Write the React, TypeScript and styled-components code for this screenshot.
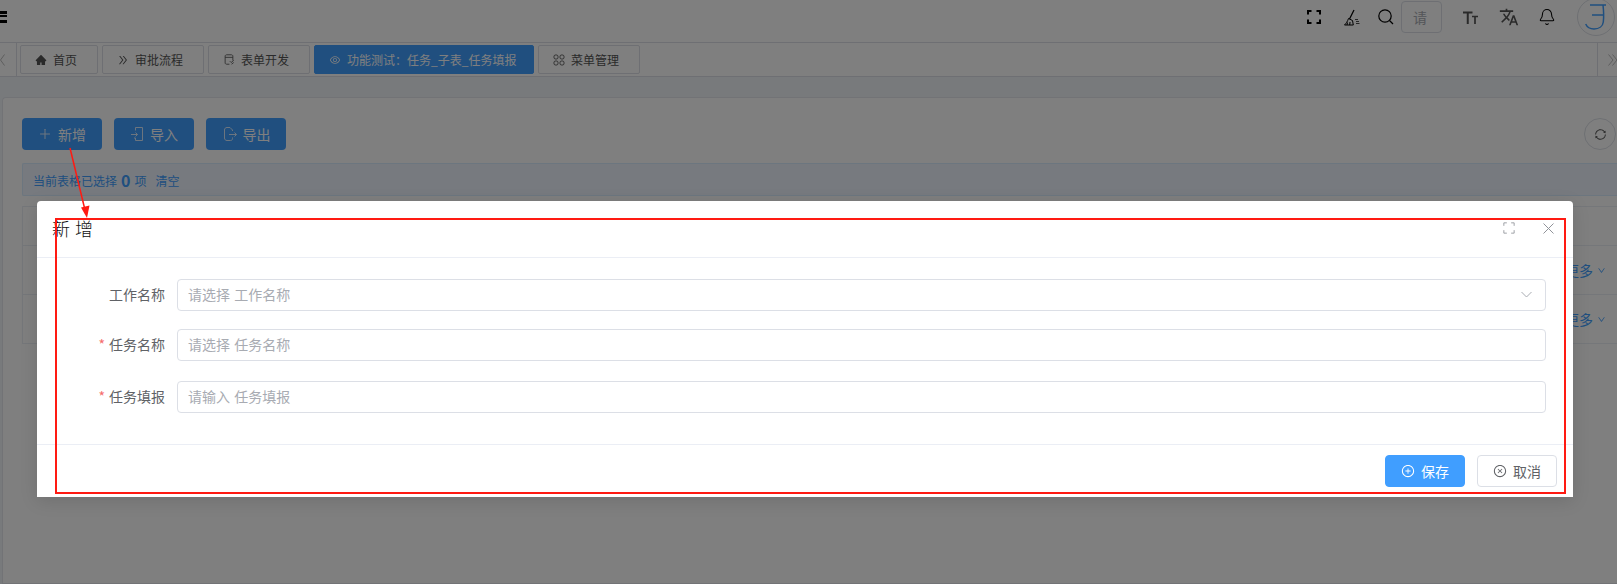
import * as React from 'react';
import styled, { createGlobalStyle } from 'styled-components';
import {
  AiOutlineCloseCircle,
  AiOutlineDoubleRight,
  AiOutlineDown,
  AiOutlineEye,
  AiOutlinePlus,
  AiOutlinePlusCircle,
  AiOutlineSync,
  AiFillHome,
} from 'react-icons/ai';
import { MdTranslate } from 'react-icons/md';
import { Bell } from 'lucide-react';

const GlobalStyle = createGlobalStyle`
  html, body {
    margin: 0;
    padding: 0;
    background: #fff;
    font-family: "Noto Sans CJK SC", "Liberation Sans", sans-serif;
    font-size: 14px;
  }
  * { box-sizing: border-box; }
`;

const Page = styled.div`
  position: relative;
  width: 1617px;
  height: 584px;
  overflow: hidden;
  background: #fff;
`;

const Header = styled.header`
  display: flex;
  align-items: flex-start;
  height: 43px;
  border-bottom: 1px solid #dcdfe6;
`;

const Burger = styled.div`
  width: 7px;
  height: 12px;
  margin-top: 11px;
  border-top: 3px solid #000;
  border-bottom: 3px solid #000;
  &::after {
    content: '';
    display: block;
    height: 2px;
    margin-top: 1px;
    background: #000;
  }
`;

const HeaderTools = styled.div`
  margin-left: auto;
  display: flex;
  align-items: flex-start;
`;

const ToolIcon = styled.span<{ $w: number; $dark?: boolean }>`
  width: ${(p) => p.$w}px;
  height: 34px;
  display: flex;
  align-items: center;
  justify-content: center;
  color: ${(p) => (p.$dark ? '#000' : '#555')};
  font-size: 20px;
`;

const SearchBox = styled.div`
  width: 41px;
  height: 32px;
  margin-top: 1px;
  margin-right: 9px;
  border: 1px solid #dcdfe6;
  border-radius: 4px;
  padding-left: 11px;
  line-height: 30px;
  font-size: 14px;
  color: #a8abb2;
`;

const Avatar = styled.div`
  width: 38px;
  height: 38px;
  margin-left: 11px;
  margin-right: 2px;
  margin-top: -2px;
  border: 1px solid #dcdfe6;
  border-radius: 50%;
  display: flex;
  align-items: center;
  justify-content: center;
`;

const TabBar = styled.nav`
  display: flex;
  height: 34px;
  border-bottom: 1px solid #dcdfe6;
`;

const TabArrow = styled.div<{ $right?: boolean }>`
  width: ${(p) => (p.$right ? '20px' : '17px')};
  flex: none;
  display: flex;
  align-items: center;
  justify-content: flex-start;
  padding-left: ${(p) => (p.$right ? '10px' : '0')};
  margin-left: ${(p) => (p.$right ? 'auto' : '0')};
  color: #bbb;
  border-left: ${(p) => (p.$right ? '1px solid #dcdfe6' : 'none')};
  border-right: ${(p) => (p.$right ? 'none' : '1px solid #dcdfe6')};
`;

const Tabs = styled.div`
  display: flex;
  gap: 4px;
  padding: 2px 0 0 3px;
`;

const Tab = styled.div<{ $w: number; $active?: boolean }>`
  flex: none;
  width: ${(p) => p.$w}px;
  height: 29px;
  display: flex;
  align-items: center;
  gap: 6px;
  padding-left: 14px;
  font-size: 12px;
  white-space: nowrap;
  border: 1px solid ${(p) => (p.$active ? '#409eff' : '#dcdfe6')};
  border-radius: 2px;
  background: ${(p) => (p.$active ? '#409eff' : '#fff')};
  color: ${(p) => (p.$active ? '#fff' : '#555')};
  svg { font-size: 12px; flex: none; }
`;

const Main = styled.main`
  height: 507px;
  padding: 20px 0 0 2px;
  background: #f0f4f9;
`;

const Card = styled.section`
  height: 100%;
  background: #fff;
  border: 1px solid #e4e7ed;
  border-right: none;
  border-radius: 4px 0 0 0;
  padding: 20px 0 0 19px;
`;

const Toolbar = styled.div`
  display: flex;
  align-items: center;
  gap: 12px;
`;

const PrimaryButton = styled.button`
  flex: none;
  width: 80px;
  height: 32px;
  display: flex;
  align-items: center;
  justify-content: center;
  gap: 6px;
  padding: 0 0 1px;
  border: none;
  border-radius: 4px;
  background: #409eff;
  color: #fff;
  font: inherit;
  svg { font-size: 14px; opacity: 0.8; }
`;

const RefreshButton = styled.button`
  margin-left: auto;
  margin-right: 1px;
  width: 32px;
  height: 32px;
  padding: 0;
  display: flex;
  align-items: center;
  justify-content: center;
  background: #fff;
  border: 1px solid #dcdfe6;
  border-radius: 50%;
  color: #555;
  font-size: 13px;
`;

const SelectionBar = styled.div`
  display: flex;
  align-items: center;
  height: 33px;
  margin-top: 13px;
  padding: 1px 0 0 10px;
  background: #eef5fe;
  border: 1px solid #d9ecff;
  border-right: none;
  border-radius: 2px 0 0 2px;
  color: #409eff;
  font-size: 12px;
  strong { font-size: 16px; margin: 0 4px; }
  a { margin-left: 9px; font-size: 12px; }
`;

const TableBox = styled.div`
  margin-top: 10px;
  border-top: 1px solid #ebeef5;
  border-left: 1px solid #ebeef5;
`;

const TableRow = styled.div<{ $h: number }>`
  height: ${(p) => p.$h}px;
  display: flex;
  align-items: center;
  justify-content: flex-end;
  padding-right: 11px;
  gap: 4px;
  border-bottom: 1px solid #ebeef5;
  color: #409eff;
  font-size: 14px;
  svg { font-size: 9px; }
`;

const Mask = styled.div`
  position: absolute;
  inset: 0;
  background: rgba(0, 0, 0, 0.5);
  padding: 201px 0 0 37px;
`;

const Dialog = styled.div`
  position: relative;
  width: 1536px;
  height: 296px;
  background: #fff;
  border-radius: 4px 4px 0 0;
  box-shadow: 0 4px 18px rgba(0, 0, 0, 0.12);
`;

const DialogHeader = styled.div`
  height: 57px;
  display: flex;
  align-items: flex-start;
  padding: 14px 19px 0 15px;
  border-bottom: 1px solid #ebeef5;
`;

const DialogTitle = styled.h2`
  margin: 0;
  font-size: 18px;
  font-weight: 300;
  line-height: 26px;
  word-spacing: 1px;
  color: #111;
`;

const HeaderActions = styled.div`
  margin-left: auto;
  display: flex;
  align-items: center;
  gap: 28px;
  color: #909399;
  padding-top: 7px;
`;

const Form = styled.div`
  height: 187px;
  padding-top: 21px;
  display: flex;
  flex-direction: column;
  border-bottom: 1px solid #ebeef5;
`;

const FormRow = styled.div<{ $gap?: number }>`
  display: flex;
  align-items: center;
  margin-top: ${(p) => p.$gap ?? 0}px;
  padding-right: 27px;
`;

const Label = styled.label`
  width: 128px;
  margin-right: 12px;
  text-align: right;
  color: #606266;
  font-size: 14px;
  line-height: 28px;
  padding-bottom: 3px;
`;

const Required = styled.span`
  color: #f56c6c;
  margin-right: 4px;
`;

const Field = styled.div`
  flex: 1;
  height: 32px;
  display: flex;
  align-items: center;
  justify-content: space-between;
  padding: 0 13px 2px 10px;
  border: 1px solid #dcdfe6;
  border-radius: 4px;
  color: #a8abb2;
  font-size: 14px;
  word-spacing: 1px;
`;

const Footer = styled.div`
  display: flex;
  justify-content: flex-end;
  gap: 12px;
  padding: 10px 16px 0 0;
`;

const FooterButton = styled.button<{ $primary?: boolean }>`
  width: 80px;
  height: 32px;
  display: flex;
  align-items: center;
  justify-content: center;
  gap: 6px;
  padding: 0;
  border: 1px solid ${(p) => (p.$primary ? '#409eff' : '#dcdfe6')};
  border-radius: 4px;
  background: ${(p) => (p.$primary ? '#409eff' : '#fff')};
  color: ${(p) => (p.$primary ? '#fff' : '#606266')};
  font: inherit;
  svg { font-size: 14px; }
`;

const RedFrame = styled.div`
  position: absolute;
  left: 18px;
  top: 17px;
  width: 1511px;
  height: 276px;
  border: 2px solid #ff1a12;
  pointer-events: none;
`;

const ArrowLayer = styled.svg`
  position: absolute;
  left: 0;
  top: 0;
  pointer-events: none;
`;

// corner brackets, the ant icon has different proportions
const Corners: React.FC<{ size: number; width?: number }> = ({ size, width = 2 }) => (
  <svg width={size} height={size} viewBox="0 0 14 14" fill="none" stroke="currentColor" strokeWidth={width}>
    <path d="M1 4.500V1h3.500M9.500 1H13v3.500M13 9.500V13H9.500M4.500 13H1V9.500" />
  </svg>
);

const CloseIcon = () => (
  <svg width="11" height="11" viewBox="0 0 11 11" fill="none" stroke="currentColor" strokeWidth="1">
    <path d="M.5.5l10 10M10.500.5l-10 10" />
  </svg>
);

const Chevron = () => (
  <svg width="11" height="7" viewBox="0 0 11 7" fill="none" stroke="#a8abb2" strokeWidth="1">
    <path d="M.5 1l5 5 5-5" />
  </svg>
);

const LeftArrow = () => (
  <svg width="5" height="12" viewBox="0 0 5 12" fill="none" stroke="currentColor" strokeWidth="1">
    <path d="M4.500.5L.5 6l4 5.500" />
  </svg>
);

const DoubleArrow = () => (
  <svg width="10" height="12" viewBox="0 0 10 12" fill="none" stroke="currentColor" strokeWidth="1" style={{ flex: 'none' }}>
    <path d="M.5.5L5 6l-4.500 5.500M4.500.5L9 6l-4.500 5.500" />
  </svg>
);

const BroomIcon = () => (
  <svg width="16" height="17" viewBox="0 0 16 17" fill="none" stroke="currentColor">
    <path d="M10 1L5.500 10" strokeWidth="1.300" />
    <path d="M4.500 9.500l4 2 .8 4.500H.5c1.500-1.500 3-3.500 4-6.500z" strokeWidth="1" />
    <path d="M3.500 13.500L3 16M6 13l-.3 3" strokeWidth="1" />
    <path d="M11 10.500h3M12 12.500h3M12 14.500h3.500" strokeWidth="1" opacity="0.7" />
  </svg>
);

const SearchIcon = () => (
  <svg width="16" height="16" viewBox="0 0 16 16" fill="none" stroke="currentColor" strokeWidth="1.200">
    <circle cx="7" cy="7" r="6.200" />
    <path d="M11.500 11.500L15 15" />
  </svg>
);

const FontSizeIcon = () => (
  <svg width="15" height="13" viewBox="0 0 15 13" fill="none" stroke="currentColor" strokeWidth="2">
    <path d="M0 1.500h9.500M4.750 1.500V13" />
    <path d="M9 5.500h6M12 5.500V13" strokeWidth="1.700" />
  </svg>
);

const ImportIcon = () => (
  <svg width="14" height="16" viewBox="0 0 14 16" fill="none" stroke="currentColor" strokeWidth="1">
    <path d="M5.500 4.500V1.500h7v13h-7V12l-1.500 0M1 8.500h6.500M5.500 6.500l2 2-2 2" />
  </svg>
);

const ExportIcon = () => (
  <svg width="15" height="16" viewBox="0 0 15 16" fill="none" stroke="currentColor" strokeWidth="1">
    <path d="M10.500 5V4L8 1.500H5C3.500 1.500 2.500 2.500 2.500 4v8c0 1.500 1 2.500 2.500 2.500h3.500c1.500 0 2-1 2-2V11.500M7 8.500h7.500M12.500 6.500l2 2-2 2" />
  </svg>
);

const FormIcon = () => (
  <svg width="12" height="13" viewBox="0 0 14 14" fill="none" stroke="currentColor" strokeWidth="1">
    <path d="M7.500 12.500h-3c-1 0-2-.5-2-1.500V3c0-1 1-1.500 2-1.500h5c1 0 2 .5 2 1.500v5M2.500 4.500h9M8 9l1.500 1.500L12.500 8M10 12.500l2.500-2" />
  </svg>
);

const GridIcon = () => (
  <svg width="12" height="12" viewBox="0 0 13 13" fill="none" stroke="currentColor" strokeWidth="1">
    <rect x="1" y="1" width="4.500" height="4.500" rx="2" />
    <rect x="7.500" y="1" width="4.500" height="4.500" rx="2" />
    <rect x="1" y="7.500" width="4.500" height="4.500" rx="2" />
    <rect x="7.500" y="7.500" width="4.500" height="4.500" rx="2" />
  </svg>
);

const AvatarLogo = () => (
  <svg width="24" height="28" viewBox="0 0 24 28" fill="none" stroke="#409eff" strokeWidth="1.500">
    <path d="M6 2h16M8 12h11M19 2c.8 7 .8 13 .3 17-.5 4-4 7-9.300 7-4 0-7-2-8.300-5" />
  </svg>
);

const tabs = [
  { w: 78, icon: <AiFillHome />, label: '首页' },
  { w: 102, icon: <AiOutlineDoubleRight />, label: '审批流程' },
  { w: 102, icon: <FormIcon />, label: '表单开发' },
  { w: 220, icon: <AiOutlineEye />, label: '功能测试：任务_子表_任务填报', active: true },
  { w: 102, icon: <GridIcon />, label: '菜单管理' },
];

export default function App() {
  return (
    <Page>
      <GlobalStyle />
      <Header>
        <Burger />
        <HeaderTools>
          <ToolIcon $w={36} $dark><Corners size={14} /></ToolIcon>
          <ToolIcon $w={39} $dark><BroomIcon /></ToolIcon>
          <ToolIcon $w={30} $dark><SearchIcon /></ToolIcon>
          <SearchBox>请</SearchBox>
          <ToolIcon $w={38}><FontSizeIcon /></ToolIcon>
          <ToolIcon $w={39}><MdTranslate /></ToolIcon>
          <ToolIcon $w={38} $dark><Bell size={18} strokeWidth={1.4} /></ToolIcon>
          <Avatar><AvatarLogo /></Avatar>
        </HeaderTools>
      </Header>
      <TabBar>
        <TabArrow><LeftArrow /></TabArrow>
        <Tabs>
          {tabs.map((t) => (
            <Tab key={t.label} $w={t.w} $active={t.active}>
              {t.icon}
              <span>{t.label}</span>
            </Tab>
          ))}
        </Tabs>
        <TabArrow $right><DoubleArrow /></TabArrow>
      </TabBar>
      <Main>
        <Card>
          <Toolbar>
            <PrimaryButton><AiOutlinePlus />新增</PrimaryButton>
            <PrimaryButton><ImportIcon />导入</PrimaryButton>
            <PrimaryButton><ExportIcon />导出</PrimaryButton>
            <RefreshButton><AiOutlineSync /></RefreshButton>
          </Toolbar>
          <SelectionBar>
            当前表格已选择<strong>0</strong>项<a>清空</a>
          </SelectionBar>
          <TableBox>
            <TableRow $h={39} />
            <TableRow $h={49}>更多<AiOutlineDown /></TableRow>
            <TableRow $h={49}>更多<AiOutlineDown /></TableRow>
          </TableBox>
        </Card>
      </Main>
      <Mask>
        <Dialog>
          <DialogHeader>
            <DialogTitle>新 增</DialogTitle>
            <HeaderActions>
              <Corners size={12} width={1} />
              <CloseIcon />
            </HeaderActions>
          </DialogHeader>
          <Form>
            <FormRow>
              <Label>工作名称</Label>
              <Field>请选择 工作名称<Chevron /></Field>
            </FormRow>
            <FormRow $gap={18}>
              <Label><Required>*</Required>任务名称</Label>
              <Field>请选择 任务名称</Field>
            </FormRow>
            <FormRow $gap={20}>
              <Label><Required>*</Required>任务填报</Label>
              <Field>请输入 任务填报</Field>
            </FormRow>
          </Form>
          <Footer>
            <FooterButton $primary><AiOutlinePlusCircle />保存</FooterButton>
            <FooterButton><AiOutlineCloseCircle />取消</FooterButton>
          </Footer>
          <RedFrame />
        </Dialog>
      </Mask>
      <ArrowLayer width="1617" height="584" viewBox="0 0 1617 584">
        <path d="M70 148L85 210" stroke="#ff1a12" strokeWidth="1.500" fill="none" />
        <path d="M81 207.500L89.500 205.500L87 218Z" fill="#ff1a12" />
      </ArrowLayer>
    </Page>
  );
}
